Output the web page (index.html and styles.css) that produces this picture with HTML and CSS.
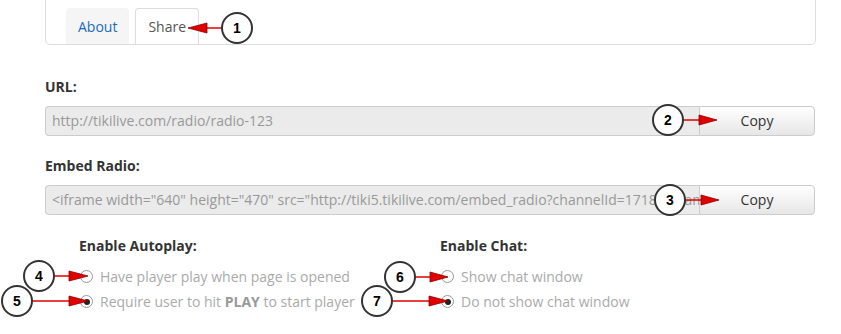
FILE: index.html
```html
<!DOCTYPE html>
<html lang="en">
<head>
    <meta charset="UTF-8">
    <title>Share Radio</title>
    <link rel="stylesheet" href="styles.css">
</head>
<body>

<div class="page">
    <div class="tab-box">
        <div class="tab">About</div>
        <div class="tab active">Share</div>
    </div>

    <div class="field-label">URL:</div>
    <div class="input-group">
        <div class="input">http://tikilive.com/radio/radio-123</div>
        <div class="button">Copy</div>
    </div>

    <div class="field-label second">Embed Radio:</div>
    <div class="input-group">
        <div class="input">&lt;iframe width="640" height="470" src="http://tiki5.tikilive.com/embed_radio?channelId=17184" frameborder="0" scrolling="no"&gt;&lt;/iframe&gt;</div>
        <div class="button">Copy</div>
    </div>

    <div class="options">
        <div class="option-col">
            <div class="option-title">Enable Autoplay:</div>
            <div class="radio-row"><span class="radio"></span>Have player play when page is opened</div>
            <div class="radio-row"><span class="radio checked"></span>Require user to hit&nbsp;<b>PLAY</b>&nbsp;to start player</div>
        </div>
        <div class="option-col">
            <div class="option-title">Enable Chat:</div>
            <div class="radio-row"><span class="radio"></span>Show chat window</div>
            <div class="radio-row"><span class="radio checked"></span>Do not show chat window</div>
        </div>
    </div>
</div>

<svg class="callouts" width="841" height="334" viewBox="0 0 841 334">
    <g class="arrow">
        <line x1="206" y1="28" x2="222" y2="28"/>
        <polygon points="188,28 207,23 207,33"/>
        <circle cx="237" cy="28" r="15"/>
        <text x="237" y="33">1</text>
    </g>
    <g class="arrow">
        <line x1="683" y1="120" x2="700" y2="120"/>
        <polygon points="717,120 699,115 699,125"/>
        <circle cx="668" cy="120" r="15"/>
        <text x="668" y="125">2</text>
    </g>
    <g class="arrow">
        <line x1="685" y1="200" x2="702" y2="200"/>
        <polygon points="719,200 701,195 701,205"/>
        <circle cx="670" cy="200" r="15"/>
        <text x="670" y="205">3</text>
    </g>
    <g class="arrow">
        <line x1="54" y1="276" x2="70" y2="276"/>
        <polygon points="88,276 69,271 69,281"/>
        <circle cx="39" cy="276" r="15"/>
        <text x="39" y="281">4</text>
    </g>
    <g class="arrow">
        <line x1="32" y1="301" x2="70" y2="301"/>
        <polygon points="88,301 69,296 69,306"/>
        <circle cx="17" cy="301" r="15"/>
        <text x="17" y="306">5</text>
    </g>
    <g class="arrow">
        <line x1="415" y1="277" x2="431" y2="277"/>
        <polygon points="448,277 430,272 430,282"/>
        <circle cx="400" cy="277" r="15"/>
        <text x="400" y="282">6</text>
    </g>
    <g class="arrow">
        <line x1="392" y1="301" x2="430" y2="301"/>
        <polygon points="448,301 429,296 429,306"/>
        <circle cx="377" cy="301" r="15"/>
        <text x="377" y="306">7</text>
    </g>
</svg>

</body>
</html>
```

FILE: styles.css
```css
body {
    margin: 0;
    font-family: 'Open Sans', 'DejaVu Sans', sans-serif;
    background: #fff;
    color: #333;
    position: relative;
    width: 841px;
    height: 334px;
    overflow: hidden;
}

.page {
    margin-left: 45px;
    width: 771px;
}

.tab-box {
    display: flex;
    gap: 6px;
    height: 36px;
    padding: 8px 0 0 20px;
    border: 1px solid #ddd;
    border-top: none;
    border-radius: 0 0 5px 5px;
}

.tab {
    height: 36px;
    padding: 0 12px;
    line-height: 37px;
    font-size: 14px;
    color: #1a6bc0;
    background: #f5f5f5;
    border-radius: 4px 4px 0 0;
    box-sizing: border-box;
}

.tab.active {
    color: #555;
    background: #fff;
    border: 1px solid #ddd;
    border-bottom: none;
    line-height: 35px;
}

.field-label {
    margin-top: 33px;
    font-size: 14px;
    font-weight: bold;
    line-height: 18px;
    color: #333;
}

.field-label.second {
    margin-top: 21px;
}

.input-group {
    display: flex;
    margin-top: 10px;
    height: 30px;
    width: 770px;
}

.input {
    flex: 1;
    min-width: 0;
    overflow: hidden;
    white-space: nowrap;
    padding: 0 6px;
    line-height: 28px;
    font-size: 14px;
    color: #999;
    background: #ebebeb;
    border: 1px solid #ccc;
    border-right: none;
    border-radius: 4px 0 0 4px;
}

.button {
    width: 114px;
    line-height: 28px;
    text-align: center;
    font-size: 14px;
    color: #333;
    background: linear-gradient(#fff, #e6e6e6);
    border: 1px solid #ccc;
    border-radius: 0 4px 4px 0;
}

.options {
    display: flex;
    margin-top: 22px;
    padding-left: 34px;
}

.option-col {
    width: 361px;
}

.option-title {
    font-size: 14px;
    font-weight: bold;
    line-height: 18px;
    color: #333;
    margin-bottom: 9px;
}

.radio-row {
    display: flex;
    align-items: center;
    height: 25px;
    font-size: 14px;
    color: #aaa;
}

.radio-row b {
    color: #999;
}

.radio {
    width: 11px;
    height: 11px;
    margin: 0 7px 0 1px;
    border: 1px solid #999;
    border-radius: 50%;
    background: #fff;
    display: flex;
    align-items: center;
    justify-content: center;
}

.radio.checked::after {
    content: "";
    width: 6px;
    height: 6px;
    border-radius: 50%;
    background: #222;
}

.callouts {
    position: absolute;
    left: 0;
    top: 0;
    pointer-events: none;
}

.arrow line {
    stroke: #e00000;
    stroke-width: 1.5;
}

.arrow polygon {
    fill: #e00000;
    stroke: #8a0000;
    stroke-width: 0.8;
}

.arrow circle {
    fill: #fff;
    stroke: #333;
    stroke-width: 2;
}

.arrow text {
    font-family: 'Liberation Sans', Arial, sans-serif;
    font-size: 14px;
    font-weight: bold;
    fill: #000;
    text-anchor: middle;
}
```
